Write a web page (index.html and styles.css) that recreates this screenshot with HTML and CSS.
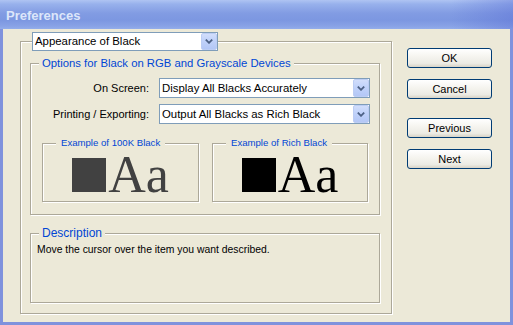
FILE: index.html
```html
<!DOCTYPE html>
<html>
<head>
<meta charset="utf-8">
<link rel="stylesheet" href="styles.css">
</head>
<body>
<div class="window">
  <div class="titlebar"><span class="title">Preferences</span></div>
  <div class="client">
    <div class="group outer">
      <div class="combo head">
        <span class="combo-text">Appearance of Black</span>
        <span class="combo-btn"><svg width="8" height="5" viewBox="0 0 8 5"><path d="M0.8 0.6 L4 3.8 L7.2 0.6" stroke="#4D6185" stroke-width="1.8" fill="none"/></svg></span>
      </div>
      <div class="group inner">
        <div class="legend opts">Options for Black on RGB and Grayscale Devices</div>
        <div class="rows">
          <label class="lbl">On Screen:</label>
          <div class="combo">
            <span class="combo-text">Display All Blacks Accurately</span>
            <span class="combo-btn"><svg width="8" height="5" viewBox="0 0 8 5"><path d="M0.8 0.6 L4 3.8 L7.2 0.6" stroke="#4D6185" stroke-width="1.8" fill="none"/></svg></span>
          </div>
          <label class="lbl">Printing / Exporting:</label>
          <div class="combo">
            <span class="combo-text">Output All Blacks as Rich Black</span>
            <span class="combo-btn"><svg width="8" height="5" viewBox="0 0 8 5"><path d="M0.8 0.6 L4 3.8 L7.2 0.6" stroke="#4D6185" stroke-width="1.8" fill="none"/></svg></span>
          </div>
        </div>
        <div class="examples">
          <div class="group example ex-left">
            <div class="legend small">Example of 100K Black</div>
            <div class="sample k100"><span class="swatch"></span><span class="aa">Aa</span></div>
          </div>
          <div class="group example ex-right">
            <div class="legend small">Example of Rich Black</div>
            <div class="sample rich"><span class="swatch"></span><span class="aa">Aa</span></div>
          </div>
        </div>
      </div>
      <div class="group desc">
        <div class="legend">Description</div>
        <p class="desc-text">Move the cursor over the item you want described.</p>
      </div>
    </div>
    <div class="buttons">
      <button class="btn">OK</button>
      <button class="btn">Cancel</button>
      <button class="btn gap">Previous</button>
      <button class="btn">Next</button>
    </div>
  </div>
</div>
</body>
</html>
```
FILE: styles.css
```css
* { box-sizing: border-box; }
html, body { margin: 0; padding: 0; }
body {
  font-family: "Liberation Sans", Arial, sans-serif;
  font-size: 11px;
  color: #000;
  background: #ECE9D8;
}
.window {
  width: 513px;
  height: 325px;
  display: flex;
  flex-direction: column;
}
.titlebar {
  height: 29px;
  flex: none;
  background:
    linear-gradient(to right, rgba(80,100,210,0) 88%, rgba(80,100,210,0.35) 100%),
    linear-gradient(to bottom, #AFC4F2 0%, #98B1EC 14%, #829CE3 45%, #7C97E1 70%, #88A2E6 90%, #93ADEA 100%);
  display: flex;
  align-items: center;
  padding-left: 6px;
}
.title {
  font-weight: bold;
  font-size: 13px;
  color: #DCE6FA;
  margin-top: 1px;
}
.client {
  flex: 1;
  background: #ECE9D8;
  border-left: 3px solid #7F92DD;
  border-right: 3px solid #7F92DD;
  border-bottom: 3px solid #7F92DD;
  display: flex;
  align-items: flex-start;
}
.group {
  border: 1px solid #ACA899;
  box-shadow: inset 1px 1px 0 #FFFFFF, 1px 1px 0 #FFFFFF;
}
.outer {
  margin-left: 17px;
  margin-top: 12px;
  width: 372px;
  height: 273px;
  flex: none;
  display: flex;
  flex-direction: column;
}
.combo {
  height: 20px;
  border: 1px solid #7F9DB9;
  background: #FFFFFF;
  display: flex;
  align-items: stretch;
  font-size: 11.4px;
}
.combo-text {
  flex: 1;
  padding-left: 2px;
  line-height: 18px;
  white-space: nowrap;
  overflow: hidden;
}
.combo-btn {
  width: 16px;
  flex: none;
  background: linear-gradient(to bottom, #D2DEFB 0%, #C2D3FA 40%, #B3C7F6 100%);
  border: 1px solid #BCCDF4;
  border-radius: 2px;
  display: flex;
  align-items: center;
  justify-content: center;
}
.head {
  margin-top: -10px;
  margin-left: 11px;
  width: 186px;
  height: 19px;
  font-size: 11.4px;
}
.head .combo-text { line-height: 17px; }
.inner {
  margin-top: 12px;
  margin-left: 9px;
  width: 350px;
  height: 152px;
}
.legend {
  width: fit-content;
  background: #ECE9D8;
  color: #0046D5;
  font-size: 12px;
  line-height: 14px;
  margin-top: -8px;
  margin-left: 8px;
  padding: 0 3px;
  white-space: nowrap;
}
.legend.opts { font-size: 11.3px; }
.rows {
  display: grid;
  grid-template-columns: 118px 211px;
  grid-auto-rows: 20px;
  column-gap: 10px;
  row-gap: 6px;
  margin-top: 8px;
}
.lbl {
  text-align: right;
  line-height: 20px;
  white-space: nowrap;
}
.examples {
  display: flex;
  gap: 13px;
  margin-top: 19px;
  margin-left: 11px;
}
.example {
  height: 59px;
}
.ex-left { width: 157px; }
.ex-right { width: 156px; }
.legend.small {
  font-size: 9.6px;
  line-height: 10px;
  margin-top: -6px;
  margin-left: 13px;
  padding: 0 5px;
}
.sample {
  display: flex;
  justify-content: center;
  align-items: baseline;
  gap: 2px;
  margin-top: 10px;
}
.swatch {
  display: block;
  width: 34px;
  height: 34px;
}
.aa {
  font-family: "Liberation Serif", "Times New Roman", serif;
  font-size: 52px;
  line-height: 34px;
}
.k100 .swatch { background: #414141; }
.k100 .aa { color: #414141; }
.rich .swatch { background: #000000; }
.rich .aa { color: #000000; }
.desc {
  margin-top: 18px;
  margin-left: 9px;
  width: 350px;
  height: 70px;
}
.desc-text {
  margin: 3px 0 0 6px;
  line-height: 13px;
  font-size: 10.4px;
}
.buttons {
  margin-left: 15px;
  margin-top: 19px;
  display: flex;
  flex-direction: column;
  gap: 11px;
}
.btn {
  width: 85px;
  height: 20px;
  padding: 0;
  font-family: "Liberation Sans", Arial, sans-serif;
  font-size: 11px;
  color: #000;
  border: 1px solid #003C74;
  border-radius: 3px;
  background: linear-gradient(to bottom, #FFFFFF 0%, #F6F5F0 40%, #ECEBE4 80%, #D8D3C6 100%);
}
.btn.gap { margin-top: 8px; }
```
